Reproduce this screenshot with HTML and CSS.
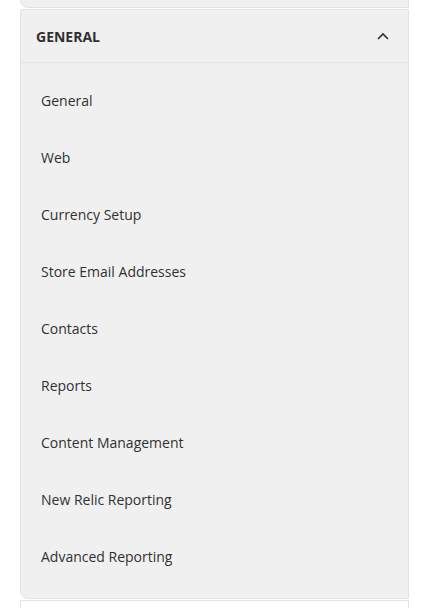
FILE: index.html
```html
<!DOCTYPE html>
<html lang="en">
<head>
    <meta charset="UTF-8">
    <title>Configuration</title>
    <link rel="stylesheet" href="styles.css">
</head>
<body>
<div class="config-nav">
    <div class="nav-block prev-block"></div>

    <div class="nav-block open">
        <div class="block-title">
            <strong>General</strong>
            <svg class="chevron" width="12" height="8" viewBox="0 0 12 8">
                <path d="M1 7 L6 2 L11 7" fill="none" stroke="#303030" stroke-width="1.6"/>
            </svg>
        </div>
        <ul class="block-items">
            <li><a href="#">General</a></li>
            <li><a href="#">Web</a></li>
            <li><a href="#">Currency Setup</a></li>
            <li><a href="#">Store Email Addresses</a></li>
            <li><a href="#">Contacts</a></li>
            <li><a href="#">Reports</a></li>
            <li><a href="#">Content Management</a></li>
            <li><a href="#">New Relic Reporting</a></li>
            <li><a href="#">Advanced Reporting</a></li>
        </ul>
    </div>

    <div class="nav-block next-block"></div>
</div>
</body>
</html>
```

FILE: styles.css
```css
body {
    margin: 0;
    padding: 0;
    height: 608px;
    background-color: #fff;
    font-family: "Open Sans", "Liberation Sans", sans-serif;
    color: #303030;
    overflow: hidden;
}

.config-nav {
    display: flex;
    flex-direction: column;
    gap: 1px;
    width: 389px;
    margin-left: 20px;
    margin-top: -42px;
}

.nav-block {
    background-color: #f0f0f0;
    border: 1px solid #e3e3e3;
    border-radius: 2px 0 0 8px;
}

.prev-block {
    height: 48px;
}

.next-block {
    background-color: #fff;
    border-bottom: none;
    border-radius: 0;
    height: 20px;
}

.block-title {
    display: flex;
    align-items: center;
    justify-content: space-between;
    height: 52px;
    padding: 0 19px 0 15px;
    border-bottom: 1px solid #e3e3e3;
}

.block-title strong {
    font-size: 14px;
    font-weight: 700;
    text-transform: uppercase;
}

.chevron {
    display: block;
}

.block-items {
    list-style: none;
    margin: 0;
    padding: 9px 0 13px;
}

.block-items li {
    height: 57px;
    display: flex;
    align-items: center;
    padding-left: 20px;
}

.block-items a {
    color: #303030;
    text-decoration: none;
    font-size: 14px;
}
```
